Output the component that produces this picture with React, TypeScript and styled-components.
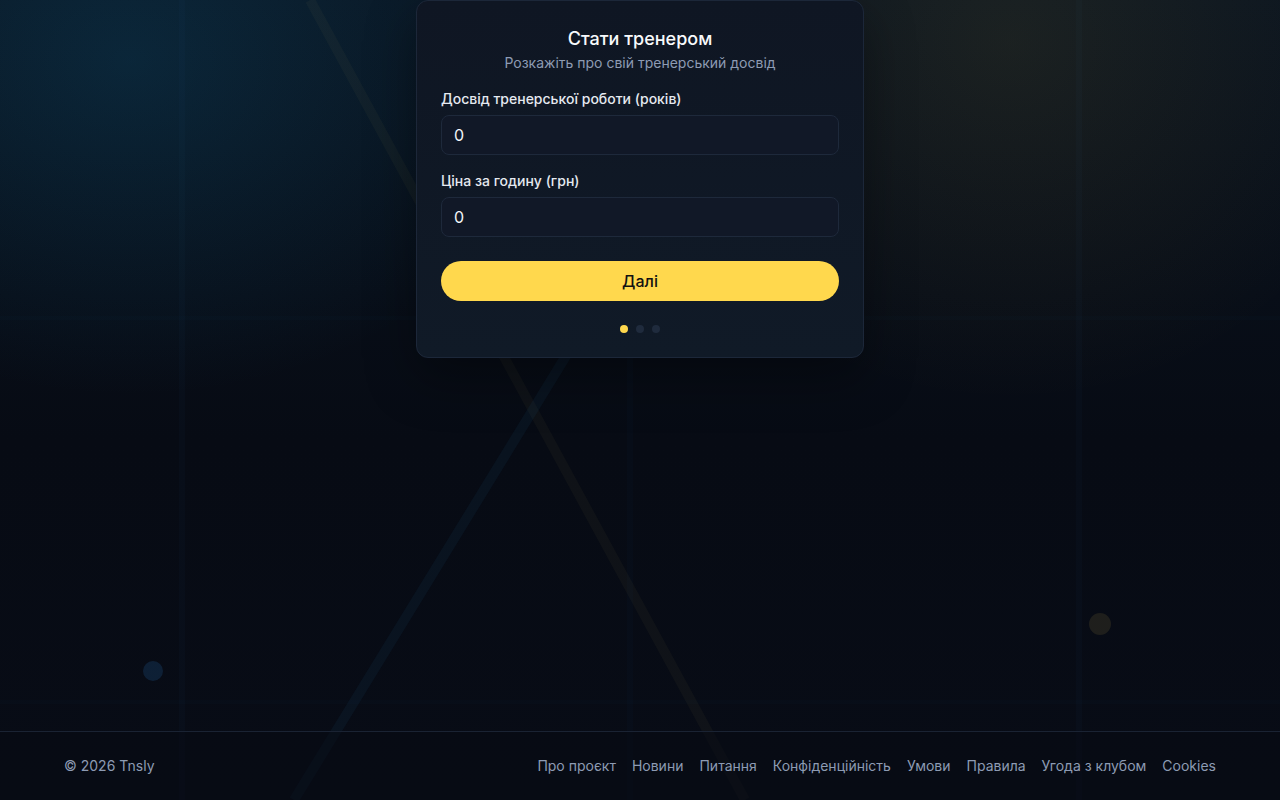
import styled, { createGlobalStyle } from 'styled-components';

const GlobalStyle = createGlobalStyle`
    * { box-sizing: border-box; }
    html, body {
        margin: 0;
        padding: 0;
        background: #070b14;
        font-family: Inter, 'Noto Sans', 'Liberation Sans', sans-serif;
        color: #f1f5f9;
    }
`;

const Page = styled.div`
    position: relative;
    min-height: 100vh;
    display: flex;
    flex-direction: column;
    overflow: hidden;
    background:
        radial-gradient(ellipse 620px 480px at 130px 60px, rgba(14, 116, 164, 0.2), transparent 70%),
        radial-gradient(ellipse 560px 520px at 1010px 40px, rgba(234, 196, 60, 0.08), transparent 70%),
        linear-gradient(180deg, #0a1420 0%, #070b14 55%, #080c16 100%);
`;

const Backdrop = styled.svg`
    position: absolute;
    inset: 0;
    width: 100%;
    height: 100%;
    pointer-events: none;
`;

const Main = styled.main`
    position: relative;
    flex: 1;
    display: flex;
    justify-content: center;
    align-items: flex-start;
`;

const Card = styled.section`
    width: 448px;
    padding: 24px;
    border-radius: 12px;
    border: 1px solid #1c2739;
    background: linear-gradient(180deg, #0f1623 0%, #101a27 100%);
    box-shadow: 0 20px 50px rgba(0, 0, 0, 0.35);
    display: flex;
    flex-direction: column;
`;

const Title = styled.h1`
    margin: 0;
    text-align: center;
    font-size: 18px;
    line-height: 28px;
    font-weight: 500;
    color: #f8fafc;
`;

const Subtitle = styled.p`
    margin: 0 0 16px;
    text-align: center;
    font-size: 14px;
    line-height: 20px;
    color: #8d9bb3;
`;

const Field = styled.label`
    display: flex;
    flex-direction: column;
    gap: 6px;
    margin-bottom: 16px;
`;

const LabelText = styled.span`
    font-size: 14px;
    line-height: 20px;
    font-weight: 500;
    color: #e5e9f0;
`;

const Input = styled.input`
    height: 40px;
    padding: 0 12px;
    border-radius: 8px;
    border: 1px solid #1e293b;
    background: #111827;
    color: #f1f5f9;
    font-family: inherit;
    font-size: 16px;
    outline: none;
`;

const NextButton = styled.button`
    margin-top: 8px;
    height: 40px;
    border: none;
    border-radius: 999px;
    background: #ffd84d;
    color: #111111;
    font-family: inherit;
    font-size: 16px;
    font-weight: 500;
    cursor: pointer;
`;

const Dots = styled.div`
    display: flex;
    justify-content: center;
    gap: 8px;
    margin-top: 24px;
`;

const Dot = styled.span<{ $active?: boolean }>`
    width: 8px;
    height: 8px;
    border-radius: 50%;
    background: ${(p) => (p.$active ? '#ffd84d' : '#1f2b3d')};
`;

const Footer = styled.footer`
    position: relative;
    display: flex;
    justify-content: space-between;
    align-items: center;
    padding: 24px 64px;
    border-top: 1px solid #1a2333;
    background: rgba(7, 11, 20, 0.55);
    font-size: 14px;
    line-height: 20px;
    color: #8d9bb3;
`;

const Links = styled.nav`
    display: flex;
    gap: 16px;
`;

const Link = styled.a`
    color: #8d9bb3;
    text-decoration: none;
`;

const links = ['Про проєкт', 'Новини', 'Питання', 'Конфіденційність', 'Умови', 'Правила', 'Угода з клубом', 'Cookies'];

const App = () => (
    <Page>
        <GlobalStyle />
        <Backdrop viewBox='0 0 1280 800' preserveAspectRatio='none'>
            <line x1='182' y1='0' x2='182' y2='800' stroke='rgba(56,140,200,0.03)' strokeWidth='6' />
            <line x1='630' y1='0' x2='630' y2='800' stroke='rgba(56,140,200,0.025)' strokeWidth='6' />
            <line x1='1079' y1='0' x2='1079' y2='800' stroke='rgba(56,140,200,0.03)' strokeWidth='6' />
            <line x1='0' y1='318' x2='1280' y2='318' stroke='rgba(56,140,200,0.02)' strokeWidth='4' />
            <line x1='0' y1='702' x2='1280' y2='702' stroke='rgba(56,140,200,0.02)' strokeWidth='4' />
            <line x1='310' y1='0' x2='745' y2='800' stroke='rgba(230,200,90,0.04)' strokeWidth='10' />
            <line x1='784' y1='0' x2='294' y2='800' stroke='rgba(40,110,160,0.08)' strokeWidth='10' />
            <circle cx='153' cy='671' r='10' fill='rgba(30,80,130,0.3)' />
            <circle cx='1100' cy='624' r='11' fill='rgba(200,170,80,0.12)' />
        </Backdrop>
        <Main>
            <Card>
                <Title>Стати тренером</Title>
                <Subtitle>Розкажіть про свій тренерський досвід</Subtitle>
                <Field>
                    <LabelText>Досвід тренерської роботи (років)</LabelText>
                    <Input type='number' defaultValue={0} />
                </Field>
                <Field>
                    <LabelText>Ціна за годину (грн)</LabelText>
                    <Input type='number' defaultValue={0} />
                </Field>
                <NextButton>Далі</NextButton>
                <Dots>
                    <Dot $active />
                    <Dot />
                    <Dot />
                </Dots>
            </Card>
        </Main>
        <Footer>
            <span>© 2026 Tnsly</span>
            <Links>
                {links.map((l) => (
                    <Link key={l} href='#'>{l}</Link>
                ))}
            </Links>
        </Footer>
    </Page>
);

export default App;
